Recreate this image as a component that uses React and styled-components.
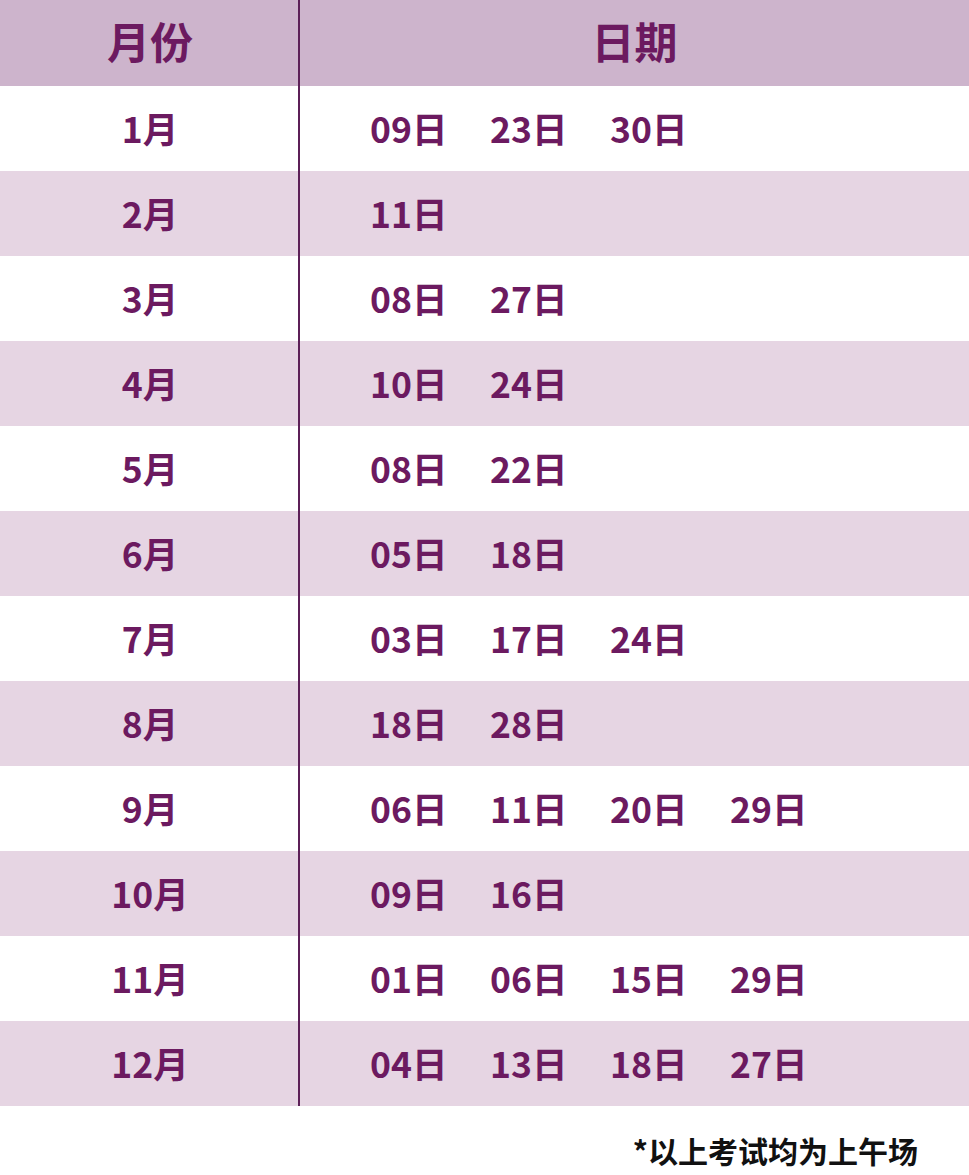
import React from "react";
import styled, { createGlobalStyle } from "styled-components";

const GlobalStyle = createGlobalStyle`
  html, body {
    margin: 0;
    padding: 0;
    background: #ffffff;
  }
  body {
    font-family: "Noto Sans CJK SC", "Noto Sans", sans-serif;
  }
`;

const textcolor = "#6c1a60";
const linecolor = "#5c1f57";

const Page = styled.div`
  width: 969px;
  height: 1175px;
  background: #ffffff;
  overflow: hidden;
`;

const Table = styled.div`
  display: grid;
  grid-template-columns: 300px 1fr;
`;

const Row = styled.div`
  display: contents;
`;

const Cell = styled.div`
  height: ${(p) => (p.$head ? "86px" : "85px")};
  box-sizing: border-box;
  display: flex;
  align-items: center;
  background: ${(p) => (p.$head ? "#cdb4cc" : p.$alt ? "#e6d5e3" : "#ffffff")};
  color: ${textcolor};
  font-weight: 700;
  font-size: ${(p) => (p.$head ? "43px" : "35.5px")};
  padding-bottom: ${(p) => (p.$head ? "6px" : "2px")};
`;

const MonthCell = styled(Cell)`
  justify-content: center;
  border-right: 2px solid ${linecolor};
  padding-left: 2px;
`;

const DateCell = styled(Cell)`
  padding-left: ${(p) => (p.$head ? "0" : "70px")};
  justify-content: ${(p) => (p.$head ? "center" : "flex-start")};
`;

const DateItem = styled.span`
  width: 120px;
  flex: none;
`;

const Footer = styled.div`
  display: flex;
  justify-content: flex-end;
  padding: 22px 51px 0 0;
  font-size: 30px;
  font-weight: 700;
  color: #111111;
`;

const data = [
  ["1月", ["09日", "23日", "30日"]],
  ["2月", ["11日"]],
  ["3月", ["08日", "27日"]],
  ["4月", ["10日", "24日"]],
  ["5月", ["08日", "22日"]],
  ["6月", ["05日", "18日"]],
  ["7月", ["03日", "17日", "24日"]],
  ["8月", ["18日", "28日"]],
  ["9月", ["06日", "11日", "20日", "29日"]],
  ["10月", ["09日", "16日"]],
  ["11月", ["01日", "06日", "15日", "29日"]],
  ["12月", ["04日", "13日", "18日", "27日"]],
];

const App = () => {
  return (
    <Page>
      <GlobalStyle />
      <Table>
        <Row>
          <MonthCell $head>月份</MonthCell>
          <DateCell $head>日期</DateCell>
        </Row>
        {data.map(([month, days], i) => (
          <Row key={month}>
            <MonthCell $alt={i % 2 === 1}>{month}</MonthCell>
            <DateCell $alt={i % 2 === 1}>
              {days.map((d) => (
                <DateItem key={d}>{d}</DateItem>
              ))}
            </DateCell>
          </Row>
        ))}
      </Table>
      <Footer>*以上考试均为上午场</Footer>
    </Page>
  );
};

export default App;
